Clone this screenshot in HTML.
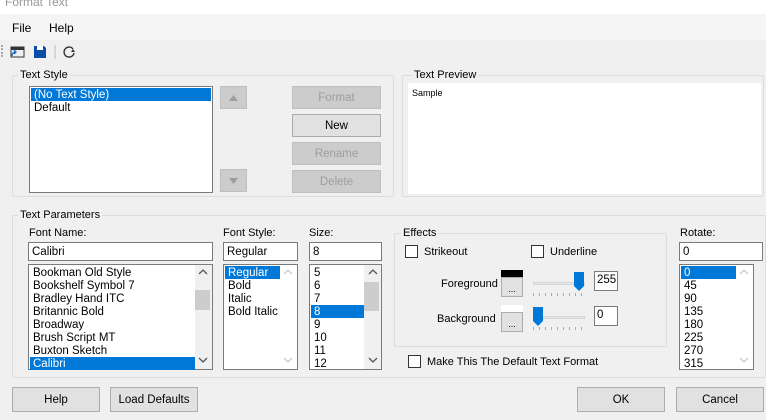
<!DOCTYPE html>
<html><head><style>
*{box-sizing:border-box;margin:0;padding:0}
body{width:766px;height:420px;background:#f0f0f0;font-family:"Liberation Sans",sans-serif;font-size:11px;color:#000;position:relative;overflow:hidden}
.a{position:absolute}
.grp{position:absolute;border:1px solid #dcdcdc;border-radius:2px}
.lbl{position:absolute;background:#f0f0f0;padding:0 2px;font-size:11px}
.box{position:absolute;background:#fff;border:1px solid #7a7a7a}
.btn{position:absolute;background:#e1e1e1;border:1px solid #adadad;text-align:center;font-size:11.5px}
.dis{background:#cccccc;border-color:#bfbfbf;color:#9d9d9d}
.row{height:13px;line-height:14px;padding-left:3px;font-size:11.5px;white-space:nowrap}
.sel{background:#0078d7;color:#fff}
.cb{position:absolute;width:13px;height:13px;border:1px solid #333;background:#fff}
.chev{position:absolute}
</style></head><body>
<div class="a" style="left:0;top:0;width:766px;height:14px;background:#fff"></div>
<div class="a" style="left:5px;top:-5px;color:#999;font-size:12px">Format Text</div>
<div class="a" style="left:0;top:14px;width:766px;height:26px;background:#f5f5f5"></div>
<div class="a" style="left:12px;top:21px;font-size:12px">File</div>
<div class="a" style="left:49px;top:21px;font-size:12px">Help</div>
<div class="a" style="left:1px;top:45px;width:2px;height:12px;border-left:2px dotted #aaa"></div>
<svg class="a" style="left:9px;top:44px" width="70" height="16">
<rect x="2" y="3" width="13" height="10" fill="none" stroke="#333"/><rect x="2" y="3" width="13" height="3" fill="#333"/>
<path d="M3 12 q0-4 4-4 M5 6 l2 2 -2 2" stroke="#1a6fc0" fill="none" stroke-width="1.3"/>
<path d="M25 2h10l2 2v10h-12z" fill="#0a4ea8"/><rect x="28" y="2" width="6" height="4" fill="#fff"/>
<line x1="46" y1="1" x2="46" y2="15" stroke="#bbb"/>
<path d="M64 5 a5 5 0 1 0 1 4" stroke="#333" fill="none" stroke-width="1.4"/><path d="M62 8l4 0-2-3z" fill="#333"/>
</svg>

<div class="grp" style="left:12px;top:75px;width:382px;height:122px"></div>
<div class="lbl" style="left:18px;top:69px">Text Style</div>
<div class="box" style="left:29px;top:86px;width:184px;height:107px;padding:1px">
<div class="row sel">(No Text Style)</div><div class="row">Default</div></div>
<div class="btn dis" style="left:220px;top:86px;width:27px;height:23px"><svg width="25" height="21"><path d="M8 14h9l-4.5-6z" fill="#9d9d9d"/></svg></div>
<div class="btn dis" style="left:220px;top:169px;width:27px;height:23px"><svg width="25" height="21"><path d="M8 8h9l-4.5 6z" fill="#9d9d9d"/></svg></div>
<div class="btn dis" style="left:292px;top:86px;width:89px;height:23px;line-height:23px">Format</div>
<div class="btn" style="left:292px;top:114px;width:89px;height:23px;line-height:23px">New</div>
<div class="btn dis" style="left:292px;top:142px;width:89px;height:23px;line-height:23px">Rename</div>
<div class="btn dis" style="left:292px;top:170px;width:89px;height:23px;line-height:23px">Delete</div>

<div class="grp" style="left:402px;top:75px;width:362px;height:122px"></div>
<div class="lbl" style="left:412px;top:69px">Text Preview</div>
<div class="a" style="left:408px;top:83px;width:353px;height:111px;background:#fff"></div>
<div class="a" style="left:412px;top:88px;font-size:9px">Sample</div>

<div class="grp" style="left:12px;top:215px;width:754px;height:163px"></div>
<div class="lbl" style="left:18px;top:209px">Text Parameters</div>
<div class="a" style="left:29px;top:227px">Font Name:</div>
<div class="box" style="left:28px;top:242px;width:185px;height:19px;padding:3px 3px;font-size:11.5px">Calibri</div>
<div class="box" style="left:28px;top:264px;width:185px;height:106px;padding:1px">
<div class="row">Bookman Old Style</div><div class="row">Bookshelf Symbol 7</div><div class="row">Bradley Hand ITC</div><div class="row">Britannic Bold</div><div class="row">Broadway</div><div class="row">Brush Script MT</div><div class="row">Buxton Sketch</div><div class="row sel" style="width:165px">Calibri</div></div>
<div class="a" style="left:195px;top:265px;width:17px;height:104px;background:#f0f0f0"></div>
<div class="a" style="left:195px;top:290px;width:15px;height:20px;background:#cdcdcd"></div>
<svg class="chev" style="left:198px;top:268px" width="10" height="8"><path d="M1 6l4-4 4 4" stroke="#555" fill="none" stroke-width="1.3"/></svg>
<svg class="chev" style="left:198px;top:356px" width="10" height="8"><path d="M1 2l4 4 4-4" stroke="#555" fill="none" stroke-width="1.3"/></svg>

<div class="a" style="left:223px;top:227px">Font Style:</div>
<div class="box" style="left:223px;top:242px;width:75px;height:19px;padding:3px 3px;font-size:11.5px">Regular</div>
<div class="box" style="left:223px;top:264px;width:75px;height:106px;padding:1px">
<div class="row sel" style="width:55px">Regular</div><div class="row">Bold</div><div class="row">Italic</div><div class="row">Bold Italic</div></div>
<svg class="chev" style="left:283px;top:268px" width="10" height="8"><path d="M1 6l4-4 4 4" stroke="#ccc" fill="none" stroke-width="1.3"/></svg>
<svg class="chev" style="left:283px;top:356px" width="10" height="8"><path d="M1 2l4 4 4-4" stroke="#ccc" fill="none" stroke-width="1.3"/></svg>

<div class="a" style="left:309px;top:227px">Size:</div>
<div class="box" style="left:309px;top:242px;width:73px;height:19px;padding:3px 3px;font-size:11.5px">8</div>
<div class="box" style="left:309px;top:264px;width:73px;height:106px;padding:1px">
<div class="row">5</div><div class="row">6</div><div class="row">7</div><div class="row sel" style="width:53px">8</div><div class="row">9</div><div class="row">10</div><div class="row">11</div><div class="row">12</div></div>
<div class="a" style="left:364px;top:265px;width:17px;height:104px;background:#f0f0f0"></div>
<div class="a" style="left:364px;top:282px;width:15px;height:29px;background:#cdcdcd"></div>
<svg class="chev" style="left:368px;top:268px" width="10" height="8"><path d="M1 6l4-4 4 4" stroke="#555" fill="none" stroke-width="1.3"/></svg>
<svg class="chev" style="left:368px;top:356px" width="10" height="8"><path d="M1 2l4 4 4-4" stroke="#555" fill="none" stroke-width="1.3"/></svg>

<div class="grp" style="left:394px;top:233px;width:273px;height:114px"></div>
<div class="lbl" style="left:401px;top:227px">Effects</div>
<div class="cb" style="left:405px;top:245px"></div><div class="a" style="left:424px;top:246px">Strikeout</div>
<div class="cb" style="left:531px;top:245px"></div><div class="a" style="left:550px;top:246px">Underline</div>
<div class="a" style="left:441px;top:278px">Foreground</div>
<div class="a" style="left:501px;top:270px;width:22px;height:7px;background:#000"></div>
<div class="btn" style="left:501px;top:277px;width:22px;height:20px;line-height:22px;font-size:9px">...</div>
<div class="a" style="left:533px;top:282px;width:52px;height:3px;background:#e7e7e7;border:1px solid #d6d6d6"></div>
<div class="a" style="left:533px;top:293px;width:52px;height:3px;background:repeating-linear-gradient(90deg,#aaa 0 1px,transparent 1px 6px)"></div>
<svg class="a" style="left:573px;top:272px" width="12" height="20"><path d="M1 0h10v14l-5 5-5-5z" fill="#0078d7"/></svg>
<div class="box" style="left:594px;top:271px;width:24px;height:20px;padding:2px;font-size:11.5px">255</div>

<div class="a" style="left:437px;top:313px">Background</div>
<div class="a" style="left:501px;top:305px;width:22px;height:7px;background:#fff"></div>
<div class="btn" style="left:501px;top:312px;width:22px;height:20px;line-height:22px;font-size:9px">...</div>
<div class="a" style="left:533px;top:316px;width:52px;height:3px;background:#e7e7e7;border:1px solid #d6d6d6"></div>
<div class="a" style="left:533px;top:327px;width:52px;height:3px;background:repeating-linear-gradient(90deg,#aaa 0 1px,transparent 1px 6px)"></div>
<svg class="a" style="left:532px;top:307px" width="12" height="20"><path d="M1 0h10v14l-5 5-5-5z" fill="#0078d7"/></svg>
<div class="box" style="left:594px;top:306px;width:24px;height:20px;padding:2px;font-size:11.5px">0</div>

<div class="cb" style="left:408px;top:355px"></div><div class="a" style="left:427px;top:356px">Make This The Default Text Format</div>

<div class="a" style="left:680px;top:227px">Rotate:</div>
<div class="box" style="left:679px;top:242px;width:84px;height:19px;padding:3px 3px;font-size:11.5px">0</div>
<div class="box" style="left:679px;top:264px;width:75px;height:106px;padding:1px">
<div class="row sel" style="width:55px">0</div><div class="row">45</div><div class="row">90</div><div class="row">135</div><div class="row">180</div><div class="row">225</div><div class="row">270</div><div class="row">315</div></div>
<svg class="chev" style="left:739px;top:268px" width="10" height="8"><path d="M1 6l4-4 4 4" stroke="#ccc" fill="none" stroke-width="1.3"/></svg>
<svg class="chev" style="left:739px;top:356px" width="10" height="8"><path d="M1 2l4 4 4-4" stroke="#ccc" fill="none" stroke-width="1.3"/></svg>

<div class="btn" style="left:12px;top:387px;width:88px;height:25px;line-height:25px">Help</div>
<div class="btn" style="left:110px;top:387px;width:88px;height:25px;line-height:25px">Load Defaults</div>
<div class="btn" style="left:577px;top:387px;width:88px;height:25px;line-height:25px">OK</div>
<div class="btn" style="left:676px;top:387px;width:88px;height:25px;line-height:25px">Cancel</div>
</body></html>
